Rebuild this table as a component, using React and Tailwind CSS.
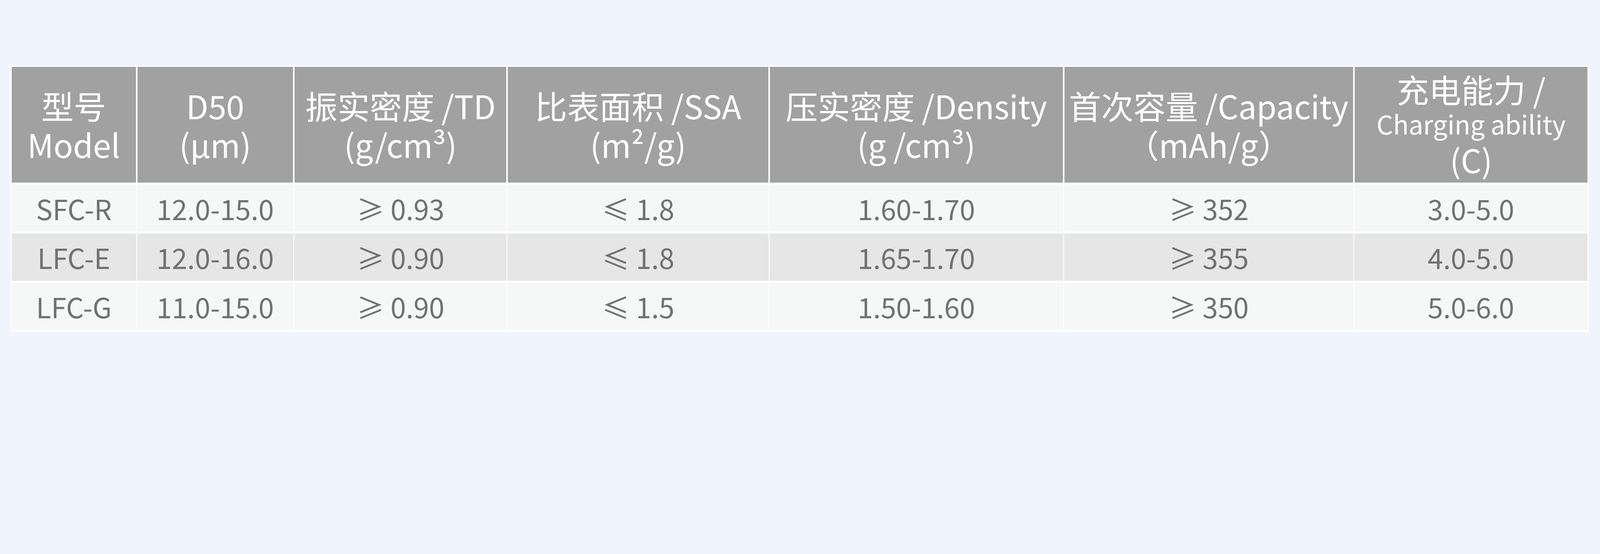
const rows = [
  ["SFC-R", "12.0-15.0", "≥ 0.93", "≤ 1.8", "1.60-1.70", "≥ 352", "3.0-5.0"],
  ["LFC-E", "12.0-16.0", "≥ 0.90", "≤ 1.8", "1.65-1.70", "≥ 355", "4.0-5.0"],
  ["LFC-G", "11.0-15.0", "≥ 0.90", "≤ 1.5", "1.50-1.60", "≥ 350", "5.0-6.0"],
];

// column template shared by header and body rows so the lines line up
const grid = "grid grid-cols-[320.3px_402.1px_546.6px_670.4px_753.8px_743.1px_598.7px]";

function HeadCell({ children }) {
  return (
    <div className="flex flex-col items-center justify-center bg-[#a0a1a0] border-x-[2.5px] border-white first:border-l-0 last:border-r-0 text-white text-[82.6px] leading-[98.3px] text-center whitespace-nowrap">
      {children}
    </div>
  );
}

export default function App() {
  return (
    <div className="w-full min-h-screen bg-[#eff4fd] font-['Noto_Sans_CJK_SC','Noto_Sans',sans-serif]">
      <div className="h-[1170px] pt-[168px] pl-[27px]">
        <div className="w-[4040px] bg-white px-[2.5px] pt-[2.5px] pb-[6px] flex flex-col gap-[5px]">
          <div className={`${grid} h-[296px]`}>
            <HeadCell>
              <span>型号</span>
              <span>Model</span>
            </HeadCell>
            <HeadCell>
              <span>D50</span>
              <span>(μm)</span>
            </HeadCell>
            <HeadCell>
              <span>振实密度 /TD</span>
              <span>(g/cm³)</span>
            </HeadCell>
            <HeadCell>
              <span>比表面积 /SSA</span>
              <span>(m²/g)</span>
            </HeadCell>
            <HeadCell>
              <span>压实密度 /Density</span>
              <span>(g /cm³)</span>
            </HeadCell>
            <HeadCell>
              <span>首次容量 /Capacity</span>
              <span>（mAh/g）</span>
            </HeadCell>
            <HeadCell>
              <span className="leading-[90px]">充电能力 /</span>
              <span className="text-[66px] leading-[87px]">Charging ability</span>
              <span className="leading-[96px]">(C)</span>
            </HeadCell>
          </div>

          {rows.map((row, i) => (
            <div key={row[0]} className={`${grid} h-[120.5px]`}>
              {row.map((val, j) => (
                <div
                  key={j}
                  className={`flex items-center justify-center border-x border-white first:border-l-0 last:border-r-0 text-[71px] text-[#717171] whitespace-nowrap ${
                    i % 2 === 1 ? "bg-[#e6e6e6]" : "bg-[#f6f8f7]"
                  }`}
                >
                  {val}
                </div>
              ))}
            </div>
          ))}
        </div>
      </div>
    </div>
  );
}
